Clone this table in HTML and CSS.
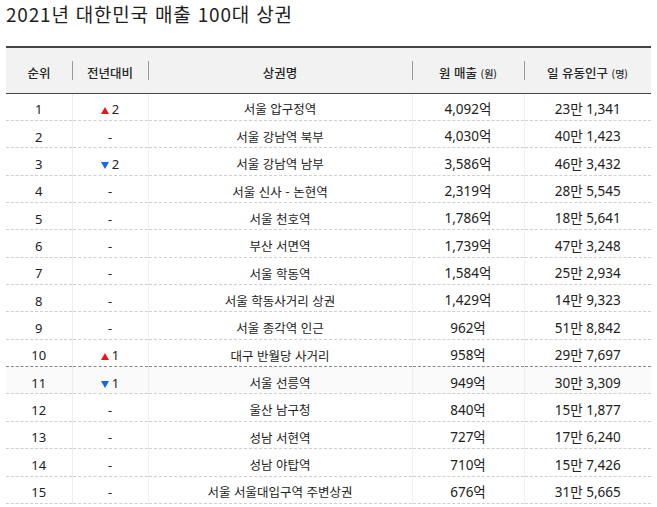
FILE: index.html
```html
<!DOCTYPE html>
<html lang="ko">
<head>
<meta charset="utf-8">
<title>2021년 대한민국 매출 100대 상권</title>
<link rel="stylesheet" href="styles.css">
</head>
<body>
<div class="page">
  <h1 class="title">2021년 대한민국 매출 100대 상권</h1>
  <table class="rank-table">
    <colgroup>
      <col class="c-rank"><col class="c-diff"><col class="c-name"><col class="c-sales"><col class="c-pop">
    </colgroup>
    <thead>
      <tr>
        <th>순위</th>
        <th class="div">전년대비</th>
        <th class="div">상권명</th>
        <th class="div">원 매출 <small>(원)</small></th>
        <th class="div">일 유동인구 <small>(명)</small></th>
      </tr>
    </thead>
    <tbody>
      <tr><td class="rank">1</td><td class="diff"><i class="up"></i>2</td><td>서울 압구정역</td><td class="num">4,092억</td><td class="num">23만 1,341</td></tr>
      <tr><td class="rank">2</td><td class="diff">-</td><td>서울 강남역 북부</td><td class="num">4,030억</td><td class="num">40만 1,423</td></tr>
      <tr><td class="rank">3</td><td class="diff"><i class="down"></i>2</td><td>서울 강남역 남부</td><td class="num">3,586억</td><td class="num">46만 3,432</td></tr>
      <tr><td class="rank">4</td><td class="diff">-</td><td>서울 신사 - 논현역</td><td class="num">2,319억</td><td class="num">28만 5,545</td></tr>
      <tr><td class="rank">5</td><td class="diff">-</td><td>서울 천호역</td><td class="num">1,786억</td><td class="num">18만 5,641</td></tr>
      <tr><td class="rank">6</td><td class="diff">-</td><td>부산 서면역</td><td class="num">1,739억</td><td class="num">47만 3,248</td></tr>
      <tr><td class="rank">7</td><td class="diff">-</td><td>서울 학동역</td><td class="num">1,584억</td><td class="num">25만 2,934</td></tr>
      <tr><td class="rank">8</td><td class="diff">-</td><td>서울 학동사거리 상권</td><td class="num">1,429억</td><td class="num">14만 9,323</td></tr>
      <tr><td class="rank">9</td><td class="diff">-</td><td>서울 종각역 인근</td><td class="num">962억</td><td class="num">51만 8,842</td></tr>
      <tr class="before-hl"><td class="rank">10</td><td class="diff"><i class="up"></i>1</td><td>대구 반월당 사거리</td><td class="num">958억</td><td class="num">29만 7,697</td></tr>
      <tr class="hl"><td class="rank">11</td><td class="diff"><i class="down"></i>1</td><td>서울 선릉역</td><td class="num">949억</td><td class="num">30만 3,309</td></tr>
      <tr><td class="rank">12</td><td class="diff">-</td><td>울산 남구청</td><td class="num">840억</td><td class="num">15만 1,877</td></tr>
      <tr><td class="rank">13</td><td class="diff">-</td><td>성남 서현역</td><td class="num">727억</td><td class="num">17만 6,240</td></tr>
      <tr><td class="rank">14</td><td class="diff">-</td><td>성남 야탑역</td><td class="num">710억</td><td class="num">15만 7,426</td></tr>
      <tr><td class="rank">15</td><td class="diff">-</td><td>서울 서울대입구역 주변상권</td><td class="num">676억</td><td class="num">31만 5,665</td></tr>
    </tbody>
  </table>
</div>
</body>
</html>
```
FILE: styles.css
```css
html, body {
  margin: 0;
  padding: 0;
  background: #fff;
}
body {
  font-family: "Noto Sans", "Noto Sans CJK KR", sans-serif;
  color: #222;
}
.page {
  padding: 0 6px;
}
.title {
  margin: 0 0 19px 0;
  font-family: "Noto Sans CJK KR", sans-serif;
  font-size: 19px;
  letter-spacing: 0.8px;
  font-weight: 400;
  line-height: 27px;
  color: #1e1e1e;
}
.rank-table {
  width: 645px;
  table-layout: fixed;
  border-collapse: collapse;
  border-top: 2px solid #444;
}
.c-rank { width: 66px; }
.c-diff { width: 76px; }
.c-name { width: 264px; }
.c-sales { width: 112px; }
.c-pop { width: 127px; }
.rank-table thead tr {
  height: 46px;
}
.rank-table th {
  padding: 5px 0 0 0;
  background-color: #f2f2f2;
  border-bottom: 1px solid #444;
  font-family: "Noto Sans CJK KR", sans-serif;
  font-size: 12.5px;
  font-weight: 500;
  color: #262626;
  text-align: center;
  vertical-align: middle;
}
.rank-table th.div {
  background-image: linear-gradient(#999, #999);
  background-repeat: no-repeat;
  background-size: 1px 19px;
  background-position: left center;
}
.rank-table th small {
  font-size: 10px;
}
.rank-table tbody tr {
  height: 27.36px;
}
.rank-table td {
  padding: 6px 0 0 0;
  border-bottom: 1px dashed #cfcfcf;
  border-left: 1px solid #eee;
  font-family: "Noto Sans CJK KR", sans-serif;
  font-size: 12.5px;
  text-align: center;
  vertical-align: middle;
  line-height: 1;
}
.rank-table td:first-child {
  border-left: 0;
}
.rank-table td.rank,
.rank-table td.diff {
  font-family: "Noto Sans", "Noto Sans CJK KR", sans-serif;
  font-size: 13px;
}
.rank-table td.num {
  font-family: "Noto Sans", "Noto Sans CJK KR", sans-serif;
  font-size: 13.5px;
}
.rank-table tr.before-hl td {
  border-bottom-color: #888;
}
.rank-table tr.hl td {
  background: #fafafa;
}
.up, .down {
  display: inline-block;
  width: 0;
  height: 0;
  margin-right: 3px;
  border-left: 4px solid transparent;
  border-right: 4px solid transparent;
  vertical-align: 0;
}
.up {
  border-bottom: 7px solid #e8141b;
}
.down {
  border-top: 7px solid #1668e8;
}
```
